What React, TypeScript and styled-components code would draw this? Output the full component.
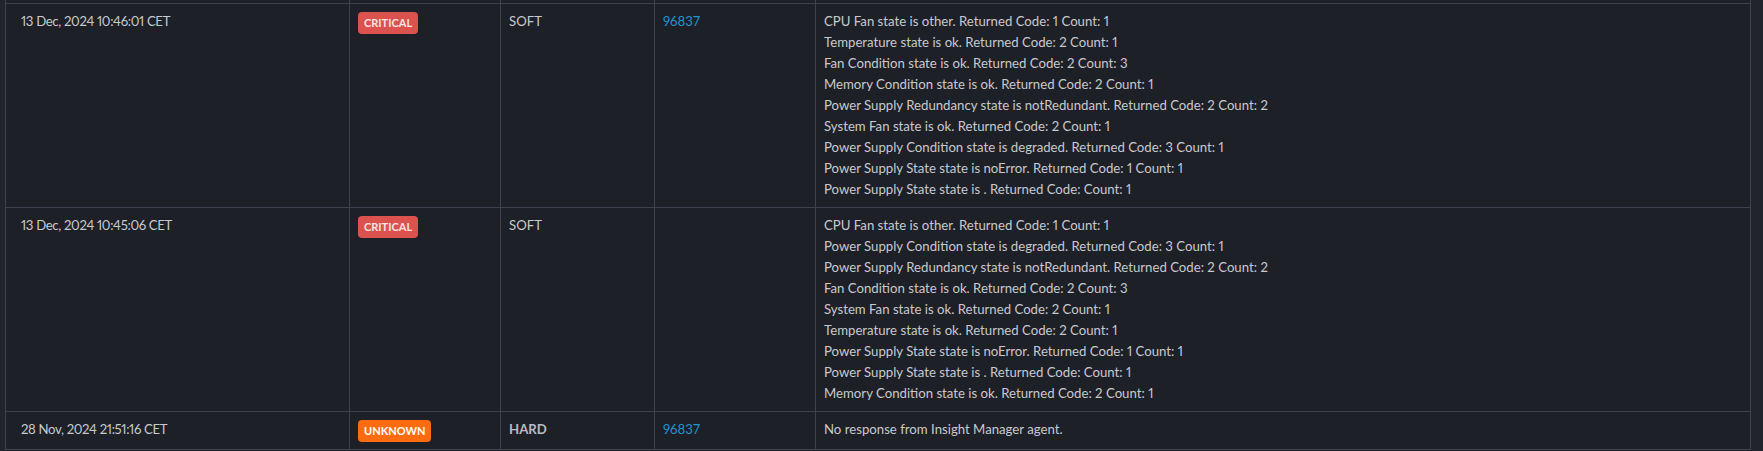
import React from "react";
import styled, { createGlobalStyle } from "styled-components";

const GlobalStyle = createGlobalStyle`
  html, body {
    margin: 0;
    padding: 0;
    background: #21242b;
  }
  body {
    font-family: Lato, "Liberation Sans", sans-serif;
    font-size: 13.2px;
    font-variant-numeric: proportional-nums;
    color: #c8c9cd;
    overflow: hidden;
  }
`;

const Page = styled.div`
  padding-left: 5px;
  height: 451px;
`;

const Table = styled.div`
  display: grid;
  grid-template-columns: 344px 151px 154px 161px 935px;
  width: 1746px;
  box-sizing: border-box;
  border-left: 1px solid #3e424e;
  background: #1e2028;
`;

const Cell = styled.div<{ $first?: boolean; $stub?: boolean }>`
  box-sizing: border-box;
  border-right: 1px solid #3e424e;
  border-bottom: 1px solid #3e424e;
  padding: ${(p) => (p.$stub ? "0" : p.$first ? "7px 8px 7px 15px" : "7px 8px")};
  height: ${(p) => (p.$stub ? "4px" : "auto")};
  line-height: 21px;
  min-width: 0;
`;

const Timestamp = styled.span`
  letter-spacing: -0.35px;
`;

const Badge = styled.span<{ $state: "critical" | "unknown" }>`
  display: inline-block;
  vertical-align: top;
  margin-top: 1px;
  height: 22px;
  line-height: 22px;
  padding: 0 6px;
  border-radius: 4px;
  font-size: 11px;
  font-weight: 700;
  background: ${(p) => (p.$state === "critical" ? "#dc524e" : "#ff6b0f")};
  color: ${(p) => (p.$state === "critical" ? "#f6e3e3" : "#ffffff")};
`;

const StateType = styled.span<{ $hard?: boolean }>`
  font-weight: ${(p) => (p.$hard ? 700 : 400)};
  color: ${(p) => (p.$hard ? "#b9bcc3" : "#c8c9cd")};
`;

const EventLink = styled.a`
  color: #1f95cf;
  text-decoration: none;
`;

const Output = styled.div`
  white-space: pre-line;
`;

type Row = {
  time: string;
  state: "critical" | "unknown";
  type: "SOFT" | "HARD";
  id?: string;
  lines: string[];
};

const rows: Row[] = [
  {
    time: "13 Dec, 2024 10:46:01 CET",
    state: "critical",
    type: "SOFT",
    id: "96837",
    lines: [
      "CPU Fan state is other. Returned Code: 1 Count: 1",
      "Temperature state is ok. Returned Code: 2 Count: 1",
      "Fan Condition state is ok. Returned Code: 2 Count: 3",
      "Memory Condition state is ok. Returned Code: 2 Count: 1",
      "Power Supply Redundancy state is notRedundant. Returned Code: 2 Count: 2",
      "System Fan state is ok. Returned Code: 2 Count: 1",
      "Power Supply Condition state is degraded. Returned Code: 3 Count: 1",
      "Power Supply State state is noError. Returned Code: 1 Count: 1",
      "Power Supply State state is . Returned Code: Count: 1",
    ],
  },
  {
    time: "13 Dec, 2024 10:45:06 CET",
    state: "critical",
    type: "SOFT",
    lines: [
      "CPU Fan state is other. Returned Code: 1 Count: 1",
      "Power Supply Condition state is degraded. Returned Code: 3 Count: 1",
      "Power Supply Redundancy state is notRedundant. Returned Code: 2 Count: 2",
      "Fan Condition state is ok. Returned Code: 2 Count: 3",
      "System Fan state is ok. Returned Code: 2 Count: 1",
      "Temperature state is ok. Returned Code: 2 Count: 1",
      "Power Supply State state is noError. Returned Code: 1 Count: 1",
      "Power Supply State state is . Returned Code: Count: 1",
      "Memory Condition state is ok. Returned Code: 2 Count: 1",
    ],
  },
  {
    time: "28 Nov, 2024 21:51:16 CET",
    state: "unknown",
    type: "HARD",
    id: "96837",
    lines: ["No response from Insight Manager agent."],
  },
];

export default function App() {
  return (
    <>
      <GlobalStyle />
      <Page>
        <Table>
          {[0, 1, 2, 3, 4].map((i) => (
            <Cell key={`stub-${i}`} $stub />
          ))}
          {rows.map((r, idx) => (
            <React.Fragment key={idx}>
              <Cell $first>
                <Timestamp>{r.time}</Timestamp>
              </Cell>
              <Cell>
                <Badge $state={r.state}>{r.state.toUpperCase()}</Badge>
              </Cell>
              <Cell>
                <StateType $hard={r.type === "HARD"}>{r.type}</StateType>
              </Cell>
              <Cell>{r.id ? <EventLink href="#">{r.id}</EventLink> : null}</Cell>
              <Cell>
                <Output>{r.lines.join("\n")}</Output>
              </Cell>
            </React.Fragment>
          ))}
        </Table>
      </Page>
    </>
  );
}
